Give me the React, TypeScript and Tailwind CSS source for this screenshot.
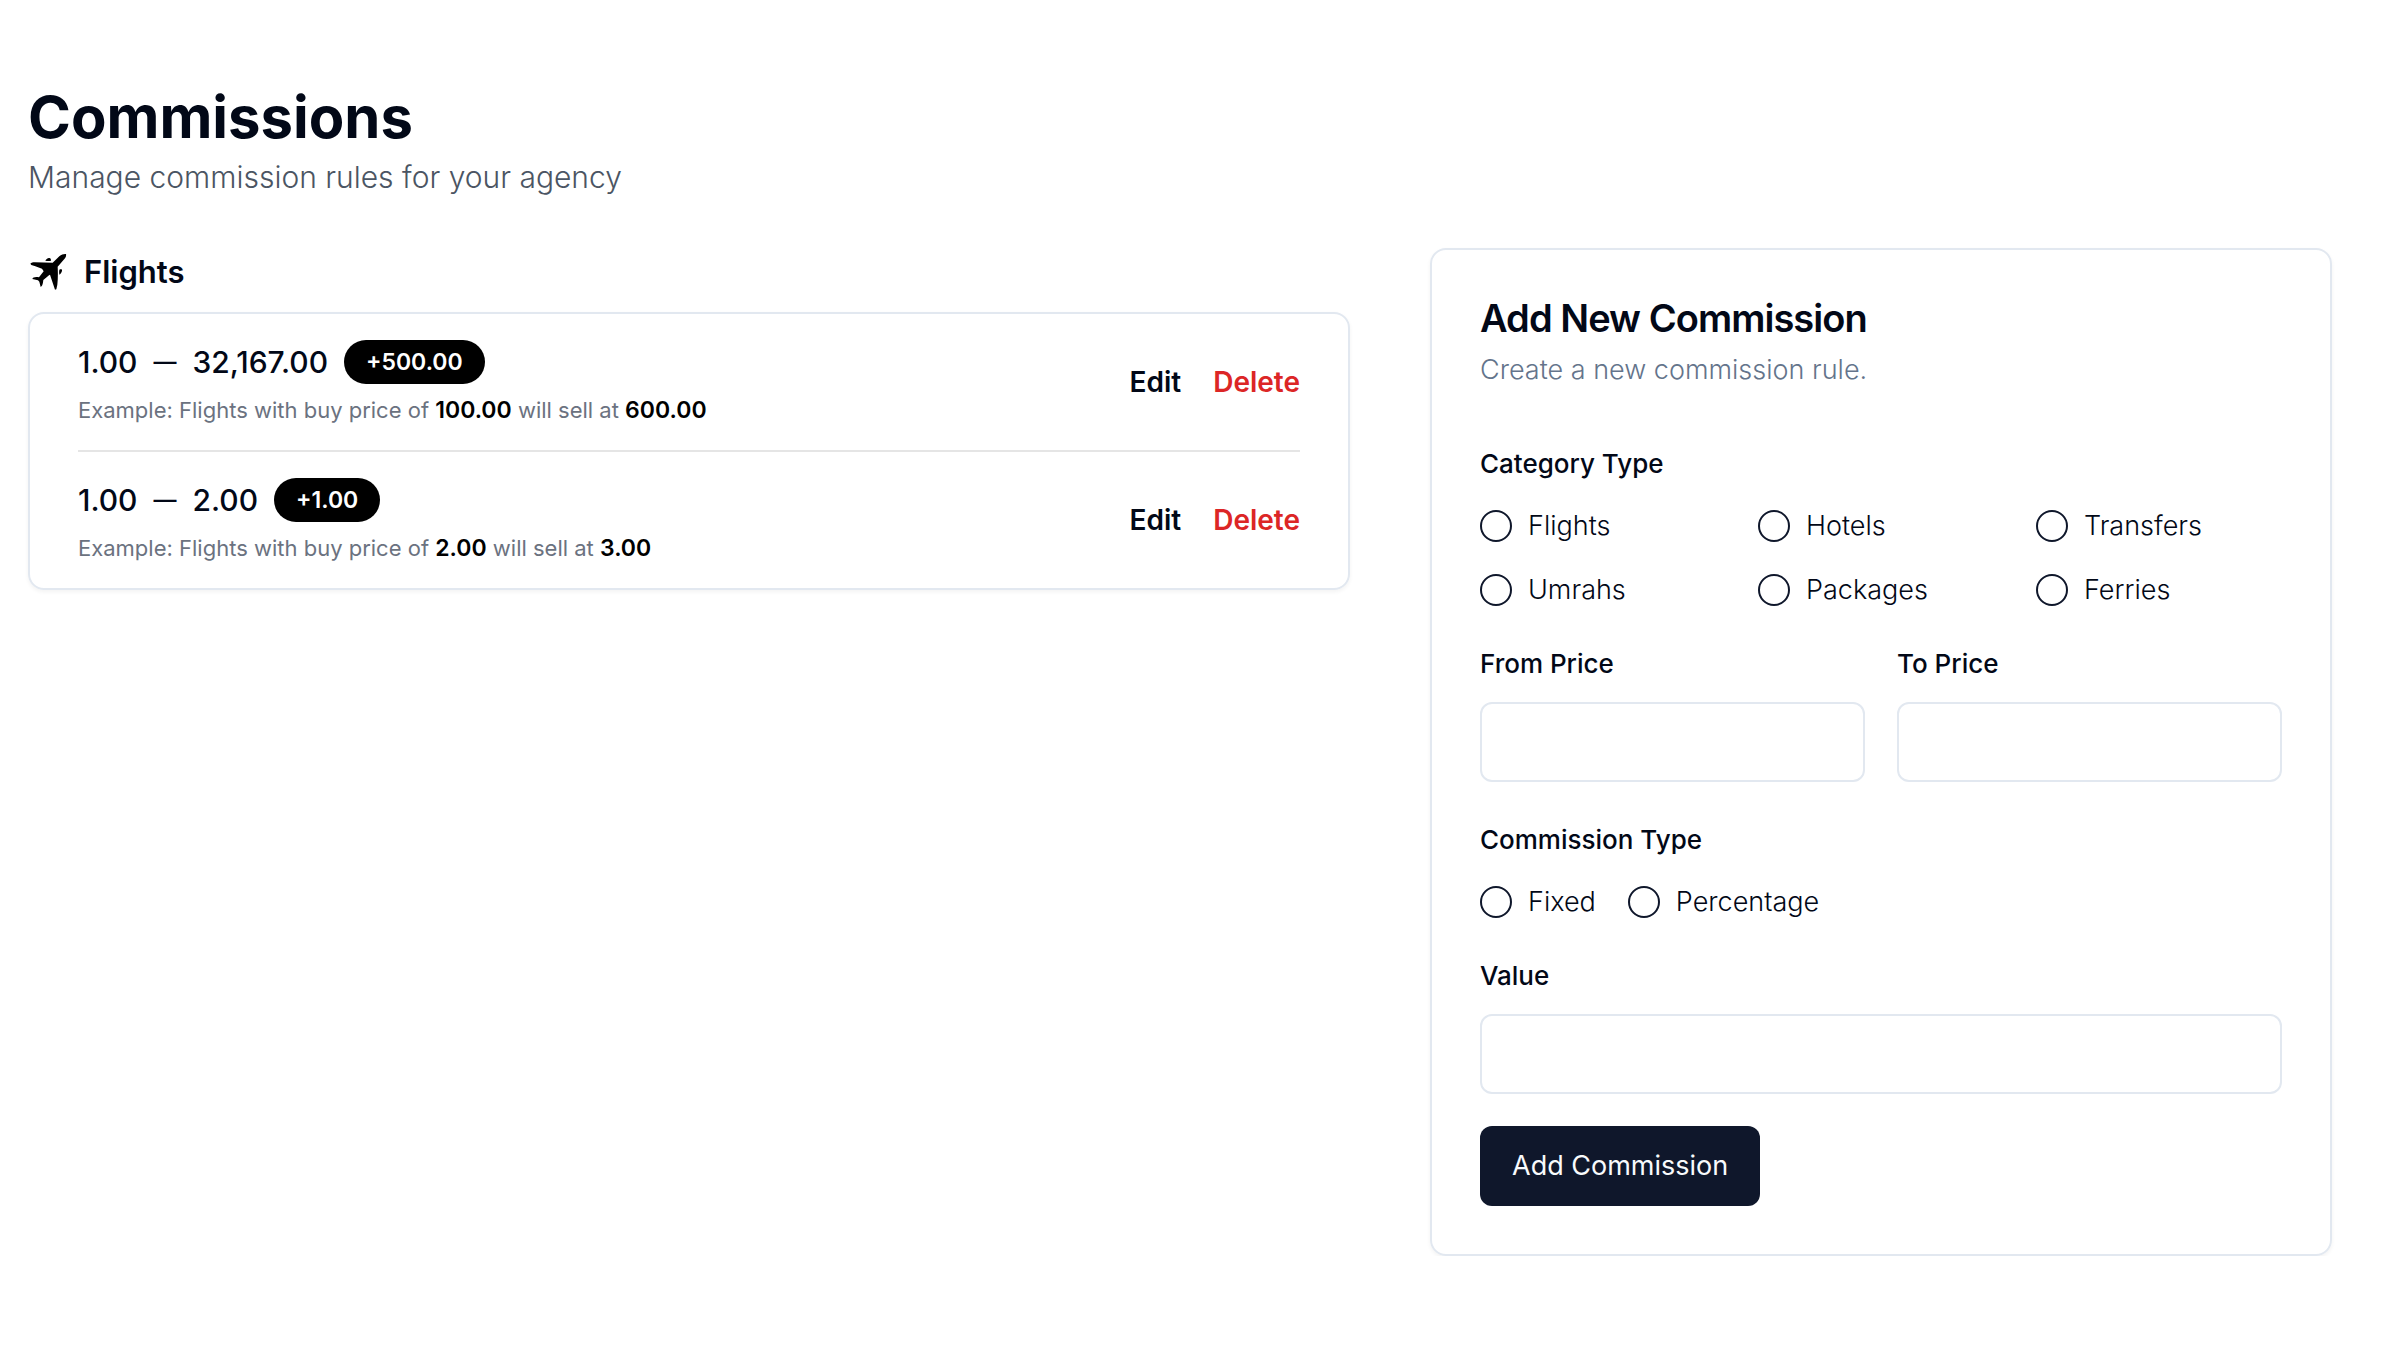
import { useState } from "react";

const rules = [
  { from: "1.00", to: "32,167.00", amount: "+500.00", buy: "100.00", sell: "600.00" },
  { from: "1.00", to: "2.00", amount: "+1.00", buy: "2.00", sell: "3.00" },
];

const categories = ["Flights", "Hotels", "Transfers", "Umrahs", "Packages", "Ferries"];

function PlaneIcon() {
  return (
    <svg viewBox="12 18 120 120" className="size-10 shrink-0" fill="#000" aria-hidden="true">
      <path d="M126 24c1 4 0 9-3 13L101 62c1 18 1 38-1 54l-3 14-4 1-3-9-12-36-3 2-17 14c-1 6-1 12-4 17l-4 4-4-16-4-4-17-4 2-4c6-2 12-2 18-1l14-18-5-8-20-7-12-4-3-4c3-3 8-4 13-4l54 1 20-19c5-4 12-8 20-7z" />
      <path d="M64 44c2-4 6-7 11-8 4-1 6 2 6 8-5 1-11 1-17 0z" />
      <path d="M106 86c-1-6-1-11 0-15 5-2 9-1 8 3-1 5-4 9-8 12z" />
    </svg>
  );
}

function Radio({ name, label, checked, onSelect }: { name: string; label: string; checked: boolean; onSelect: () => void }) {
  return (
    <label className="flex h-8 items-center gap-4 text-[27px] leading-8 font-light">
      <input
        type="radio"
        name={name}
        checked={checked}
        onChange={onSelect}
        className="size-8 shrink-0 appearance-none rounded-full border-2 border-slate-900 checked:border-[10px]"
      />
      {label}
    </label>
  );
}

function Field({ id, label }: { id: string; label: string }) {
  return (
    <div className="flex flex-col gap-6">
      <label htmlFor={id} className="text-[26px] leading-7 font-medium">
        {label}
      </label>
      <input id={id} type="text" className="h-20 w-full rounded-xl border-2 border-slate-200 px-6 text-[26px]" />
    </div>
  );
}

export default function App() {
  const [category, setCategory] = useState("");
  const [type, setType] = useState("");

  return (
    <main className="bg-white pt-20 pr-16 pl-7 font-['Inter',sans-serif] text-[#020817]">
      <h1 className="text-[58px] leading-[74px] font-bold">Commissions</h1>
      <p className="mb-12 text-[30px] leading-[46px] font-light text-[#4b5563]">Manage commission rules for your agency</p>

      <div className="grid grid-cols-[1322fr_902fr] items-start gap-20">
        <section>
          <div className="mb-4 flex h-12 items-center gap-4">
            <PlaneIcon />
            <h2 className="text-[31px] leading-[48px] font-semibold">Flights</h2>
          </div>
          <ul className="divide-y-2 divide-neutral-200 rounded-2xl border-2 border-slate-200 px-12 shadow-[0_2px_4px_rgba(0,0,0,0.05)]">
            {rules.map((rule) => (
              <li key={rule.amount} className="flex items-center justify-between py-6">
                <div>
                  <div className="flex h-12 items-center gap-4 text-[30px] font-medium">
                    <span>{rule.from}</span>
                    <span className="text-[23px]">—</span>
                    <span>{rule.to}</span>
                    <span className="flex h-11 items-center rounded-full bg-black px-[22px] text-[23px] font-semibold text-white">
                      {rule.amount}
                    </span>
                  </div>
                  <p className="pt-2 text-[22px] leading-8 text-[#6b7280]">
                    Example: Flights with buy price of{" "}
                    <strong className="text-[23px] font-semibold text-black">{rule.buy}</strong> will sell at{" "}
                    <strong className="text-[23px] font-semibold text-black">{rule.sell}</strong>
                  </p>
                </div>
                <div className="flex gap-8 text-[28px] leading-10 font-semibold">
                  <button type="button">Edit</button>
                  <button type="button" className="text-[#dc2626]">
                    Delete
                  </button>
                </div>
              </li>
            ))}
          </ul>
        </section>

        <form
          className="rounded-2xl border-2 border-slate-200 p-12 shadow-[0_2px_4px_rgba(0,0,0,0.05)]"
          onSubmit={(e) => e.preventDefault()}
        >
          <h2 className="text-[38px] leading-10 font-semibold tracking-tight">Add New Commission</h2>
          <p className="mt-3 text-[27px] leading-10 font-light text-[#64748b]">Create a new commission rule.</p>

          <fieldset className="mt-15">
            <legend className="text-[26px] leading-7 font-medium">Category Type</legend>
            <div className="mt-8 grid grid-cols-3 gap-8">
              {categories.map((c) => (
                <Radio key={c} name="category" label={c} checked={category === c} onSelect={() => setCategory(c)} />
              ))}
            </div>
          </fieldset>

          <div className="mt-11 grid grid-cols-2 gap-8">
            <Field id="from-price" label="From Price" />
            <Field id="to-price" label="To Price" />
          </div>

          <fieldset className="mt-11">
            <legend className="text-[26px] leading-7 font-medium">Commission Type</legend>
            <div className="mt-8 flex gap-8">
              {["Fixed", "Percentage"].map((t) => (
                <Radio key={t} name="type" label={t} checked={type === t} onSelect={() => setType(t)} />
              ))}
            </div>
          </fieldset>

          <div className="mt-11">
            <Field id="value" label="Value" />
          </div>

          <button type="submit" className="mt-8 flex h-20 items-center rounded-xl bg-slate-900 px-8 text-[27px] text-slate-50">
            Add Commission
          </button>
        </form>
      </div>
    </main>
  );
}
